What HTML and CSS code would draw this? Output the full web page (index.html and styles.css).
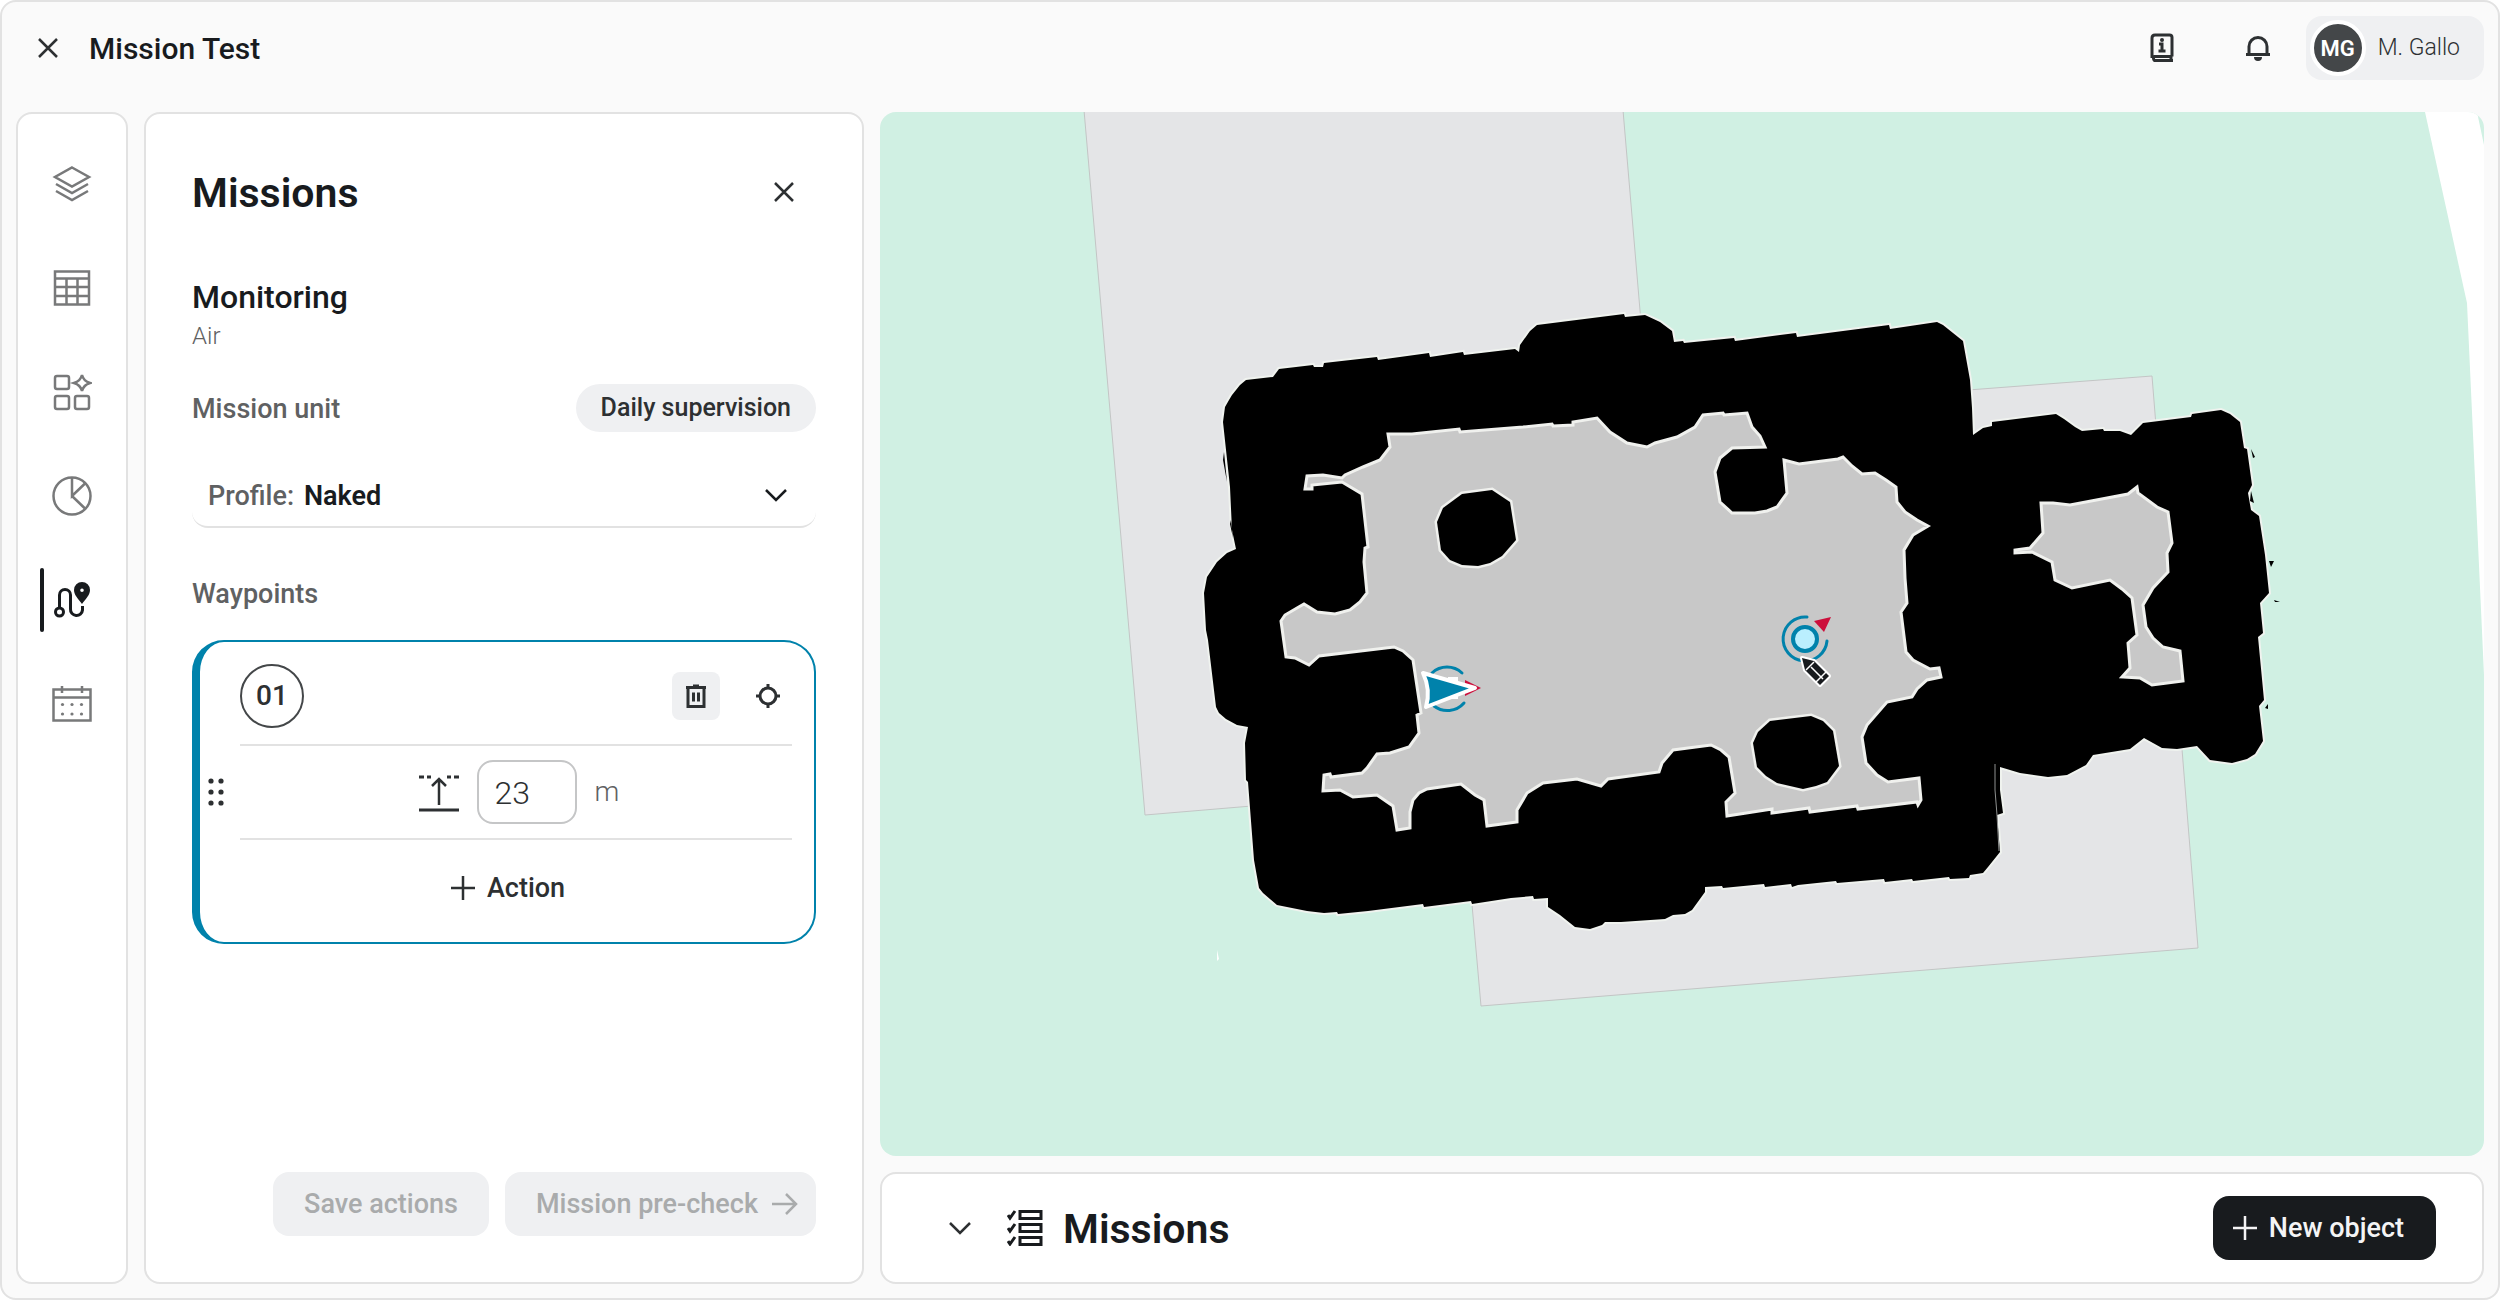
FILE: index.html
```html
<!DOCTYPE html>
<html lang="en">
<head>
<meta charset="utf-8">
<meta name="viewport" content="width=device-width, initial-scale=1">
<title>Mission Test</title>
<link rel="stylesheet" href="styles.css">
</head>
<body>
<div class="app">
  <header class="topbar">
    <button class="icon-btn" type="button" aria-label="Close mission">
      <svg class="icon" width="24" height="24" viewBox="0 0 24 24"><path d="M3 3 21 21M21 3 3 21"/></svg>
    </button>
    <h1 class="topbar-title">Mission Test</h1>
    <div class="topbar-tools">
      <button class="icon-btn" type="button" aria-label="Guide">
        <svg class="icon icon-thick" width="32" height="32" viewBox="0 0 32 32"><path d="M26 24.500H8.500a2.500 2.500 0 0 0 0 4H27M25 24.500v4M6 26V6q0-3 3-3h14.500q2.500 0 2.500 2.500v19M6 26q0-1.500 2.500-1.500"/><path d="M13 12h3v7M12.500 19h7"/><circle class="dot" cx="16" cy="8" r="2"/></svg>
      </button>
      <button class="icon-btn" type="button" aria-label="Notifications">
        <svg class="icon icon-thick" width="32" height="32" viewBox="0 0 32 32"><path d="M4 22.500h24M7 22V14.500a9 9 0 0 1 18 0V22"/><path class="dot" d="M12 25h8a4 4 0 0 1-8 0"/></svg>
      </button>
    </div>
    <button class="user" type="button"><span class="avatar">MG</span><span>M. Gallo</span></button>
  </header>

  <div class="workspace">
    <nav class="rail" aria-label="Sections">
      <a class="rail-link" href="#layers" aria-label="Layers"><svg class="icon" width="40" height="40" viewBox="0 0 40 40"><path d="M20 3.500 37 13 20 22.500 3 13ZM4 20l16 9 16-9M4 27l16 9 16-9"/></svg></a>
      <a class="rail-link" href="#table" aria-label="Table"><svg class="icon" width="40" height="40" viewBox="0 0 40 40"><path d="M3 3.500h34v33H3ZM3 10.500h34M3 19h34M3 28h34M14.500 11v25M25.500 11v25"/></svg></a>
      <a class="rail-link" href="#apps" aria-label="Apps"><svg class="icon" width="40" height="40" viewBox="0 0 40 40"><rect x="3" y="4" width="14" height="13" rx="2"/><rect x="3" y="24" width="14" height="13" rx="2"/><rect x="23" y="24" width="14" height="13" rx="2"/><path d="M30 3q1.500 6 8 8-6.500 2-8 8-1.500-6-8-8 6.500-2 8-8Z"/></svg></a>
      <a class="rail-link" href="#reports" aria-label="Reports"><svg class="icon" width="40" height="40" viewBox="0 0 40 40"><circle cx="20" cy="20" r="18.500"/><path d="M20 1.500V20L33 7.500M20 20 33 32.500"/></svg></a>
      <a class="rail-link rail-link-active" href="#missions" aria-label="Missions" aria-current="page"><svg class="icon icon-thick" width="40" height="40" viewBox="0 0 40 40"><circle cx="7.500" cy="32" r="4"/><path d="M7.500 27.500V15a5.500 5.500 0 0 1 11 0v14a6 6 0 0 0 12 1v-4"/><path class="dot" fill-rule="evenodd" d="M30 2a8 8 0 0 0-8 8c0 5 4 8.500 8 14 4-5.500 8-9 8-14a8 8 0 0 0-8-8Zm0 6.500a1.800 1.800 0 1 1 0 3.600 1.800 1.800 0 0 1 0-3.600Z"/></svg></a>
      <a class="rail-link" href="#calendar" aria-label="Calendar"><svg class="icon" width="40" height="40" viewBox="0 0 40 40"><path d="M1.500 5.500h37v31h-37ZM2 13.500h36M10 2v7M30 2v7"/><g class="dot"><circle cx="10.500" cy="20.500" r="1.600"/><circle cx="20" cy="20.500" r="1.600"/><circle cx="29.500" cy="20.500" r="1.600"/><circle cx="10.500" cy="30" r="1.600"/><circle cx="20" cy="30" r="1.600"/><circle cx="29.500" cy="30" r="1.600"/></g></svg></a>
    </nav>

    <aside class="panel">
      <div class="panel-head">
        <h2 class="heading">Missions</h2>
        <button class="icon-btn" type="button" aria-label="Close panel">
          <svg class="icon" width="24" height="24" viewBox="0 0 24 24"><path d="M3 3 21 21M21 3 3 21"/></svg>
        </button>
      </div>
      <h3 class="mission-name">Monitoring</h3>
      <p class="mission-kind">Air</p>
      <div class="unit-row"><span class="label">Mission unit</span><span class="tag">Daily supervision</span></div>
      <div class="profile">
        <label class="label" for="profile">Profile:</label>
        <select id="profile" class="profile-select"><option>Naked</option></select>
        <svg class="icon profile-arrow" width="24" height="24" viewBox="0 0 24 24"><path d="m2 7 10 10L22 7"/></svg>
      </div>
      <h3 class="label waypoints-title">Waypoints</h3>
      <section class="waypoint" aria-label="Waypoint 01">
        <svg class="grip" width="16" height="32" viewBox="0 0 16 32"><circle cx="3" cy="5" r="2.600"/><circle cx="13" cy="5" r="2.600"/><circle cx="3" cy="16" r="2.600"/><circle cx="13" cy="16" r="2.600"/><circle cx="3" cy="27" r="2.600"/><circle cx="13" cy="27" r="2.600"/></svg>
        <div class="waypoint-body">
          <div class="waypoint-head">
            <span class="number">01</span>
            <button class="square-btn square-btn-filled" type="button" aria-label="Delete waypoint">
              <svg class="icon icon-thick" width="28" height="28" viewBox="0 0 28 28"><path d="M4 5.500h20M11 4h6M6 6v18.500h16V6M11.500 10.500v9M16.500 10.500v9"/></svg>
            </button>
            <button class="square-btn" type="button" aria-label="Centre on waypoint">
              <svg class="icon icon-thick" width="28" height="28" viewBox="0 0 28 28"><circle cx="14" cy="14" r="8"/><path d="M14 2v5M14 21v5M2 14h5M21 14h5"/></svg>
            </button>
          </div>
          <div class="height-row">
            <svg class="icon" width="40" height="40" viewBox="0 0 40 40"><path d="M20 33V7M13 14l7-7 7 7"/><path class="bar" d="M0 38h40M0 5h5M8 5h4M28 5h4M35 5h5"/></svg>
            <input class="height-input" type="text" value="23" aria-label="Height in metres">
            <span class="unit">m</span>
          </div>
          <button class="add-action" type="button">
            <svg class="icon" width="24" height="24" viewBox="0 0 24 24"><path d="M12 0v24M0 12h24"/></svg>Action
          </button>
        </div>
      </section>
      <div class="panel-actions">
        <button class="btn" type="button" disabled>Save actions</button>
        <button class="btn btn-arrow" type="button" disabled>Mission pre-check
          <svg class="icon" width="26" height="24" viewBox="0 0 26 24"><path d="M0 12h24M14 2l10 10-10 10"/></svg>
        </button>
      </div>
    </aside>

    <main class="stage">
      <div class="map">
        <svg class="map-canvas" viewBox="880 112 1604 1044" preserveAspectRatio="xMidYMid slice" role="img" aria-label="Floor map">
          <path class="road" d="M2425 112 2467 303 2484 675V145L2477 112Z"/>
          <path class="zone" d="M1084 110H1623L1679 770 1145 815Z"/>
          <path class="zone" d="M1430 431 2152 376 2198 948 1481 1006Z"/>
          <path class="road" d="M1217 950l2 9-2 2Z"/>
          <path class="wall" d="M1225 407 1229 400 1232 395 1240 385 1246 380 1273 377 1279 369 1313 365 1314 367 1323 367 1324 363 1377 357 1378 360 1429 353 1430 357 1463 352 1464 355 1515 349 1519 352 1520 345 1530 331 1537 325 1624 314 1625 317 1645 315 1660 322 1672 331 1674 342 1683 341 1684 343 1734 338 1735 341 1796 333 1797 337 1889 325 1890 329 1937 322 1943 325 1963 341 1970 380 1972 408 1973 435 1983 428 1992 426 1992 422 2056 414 2064 419 2075 427 2082 431 2103 429 2104 431 2120 431 2131 435 2136 430 2143 423 2191 417 2192 414 2221 410 2230 414 2240 422 2244 448 2247 449 2252 485 2248 493 2251 510 2259 516 2265 555 2269 593 2260 603 2263 633 2258 637 2264 700 2259 706 2263 741 2255 754 2247 759 2232 763 2210 760 2197 746 2177 749 2162 748 2144 738 2130 749 2093 755 2086 765 2067 775 2048 777 2020 773 2000 767 2000 790 2003 813 1997 815 2000 852 1988 867 1983 873 1970 875 1969 878 1950 879 1949 877 1913 881 1912 879 1885 882 1884 879 1837 883 1836 881 1798 885 1792 887 1791 884 1765 887 1764 884 1723 888 1722 886 1705 887 1705 892 1692 910 1685 914 1673 915 1665 919 1621 922 1605 922 1602 925 1590 929 1575 927 1560 915 1548 907 1548 898 1534 899 1533 896 1511 898 1472 904 1471 901 1424 907 1423 904 1368 911 1338 914 1337 912 1324 913 1307 911 1277 905 1263 893 1259 888 1254 860 1248 782 1246 780 1245 743 1248 727 1237 725 1226 719 1219 713 1216 707 1208 640 1206 630 1204 593 1207 577 1217 562 1227 553 1236 549 1232 530 1230 487 1223 422Z"/>
          <path class="seam" d="M1995 764v26l2 25 2 36"/>
          <path class="room" d="M1323 475 1307 476 1305 489 1312 489 1312 485 1342 482 1362 494 1368 547 1365 548 1364 562 1367 593 1360 602 1350 610 1335 614 1317 612 1304 604 1297 608 1285 615 1281 621 1286 657 1295 658 1309 665 1319 656 1394 647 1403 651 1413 660 1421 713 1417 715 1419 733 1409 747 1390 753 1377 754 1367 768 1362 773 1331 777 1330 774 1324 775 1323 791 1340 790 1353 797 1377 795 1393 806 1397 830 1410 828 1410 812 1413 800 1419 793 1427 789 1461 784 1475 795 1484 800 1487 826 1517 822 1517 810 1527 793 1543 783 1577 779 1601 786 1608 779 1659 772 1662 763 1673 750 1711 745 1721 750 1729 757 1735 793 1726 802 1727 816 1772 809 1772 813 1809 808 1810 812 1857 806 1858 809 1917 802 1918 805 1921 800 1919 778 1888 782 1877 775 1866 763 1862 737 1867 725 1887 702 1912 697 1917 689 1927 680 1941 677 1939 668 1930 669 1913 660 1906 652 1901 612 1907 603 1905 578 1904 550 1913 535 1928 526 1917 520 1905 512 1897 502 1896 487 1886 480 1875 473 1862 474 1852 466 1843 457 1838 459 1799 464 1784 460 1787 493 1777 507 1767 511 1755 513 1732 513 1720 502 1715 472 1720 458 1732 448 1765 447 1760 436 1752 427 1747 413 1724 415 1723 413 1703 415 1695 427 1677 437 1655 443 1647 447 1627 443 1610 432 1597 418 1573 422 1573 425 1553 426 1552 424 1523 427 1460 432 1459 429 1412 434 1388 434 1390 447 1380 460 1363 467 1345 475 1342 478Z"/>
          <path class="room" d="M2041 503 2053 503 2070 505 2107 498 2128 494 2137 487 2138 493 2157 507 2168 512 2172 543 2167 553 2168 572 2153 588 2143 605 2146 627 2153 638 2163 647 2180 651 2183 681 2152 685 2140 678 2122 677 2130 668 2128 643 2137 635 2132 598 2122 589 2110 580 2072 588 2055 580 2052 562 2032 552 2015 553 2015 550 2030 548 2043 533Z"/>
          <path class="pillar" d="M1462 494 1492 490 1510 502 1516 540 1502 556 1490 563 1478 566 1462 565 1450 560 1441 550 1437 522 1443 508Z"/>
          <path class="pillar" d="M1770 721 1811 716 1823 721 1833 731 1839 766 1827 782 1816 786 1803 789 1777 783 1766 776 1757 767 1753 743 1758 732Z"/>
          <path class="debris" d="M2251 449l4 8-2 1ZM2269 561h5l-3 6ZM2274 600l6 2-5 0ZM2265 708l3-4v5ZM2251 491l3 12-4-2ZM1224 452l3 30-4-22ZM1231 520l2 18-3-14Z"/>

          <g class="robot">
            <path class="arc" d="M1432 673a22 22 0 0 1 30 0M1434 706a22 22 0 0 0 30-3"/>
            <path class="heading-mark" d="M1465 680 1481 688 1465 696Z"/>
            <path class="robot-body" d="M1448 677h10v22h-10Z"/>
            <path class="arrow" d="M1423 673 1475 688 1426 707Q1431 690 1423 673Z"/>
          </g>
          <g class="target">
            <path class="arc" d="M1807 617A22 22 0 1 0 1827 641"/>
            <circle class="core" cx="1805" cy="639" r="12"/>
            <path class="heading-mark" d="M1814 621 1831 617 1824 632Z"/>
          </g>
          <g class="pencil">
            <path class="pencil-edge" d="M1802 658 1814 661 1829 676 1820 685 1805 670Z"/>
            <path class="pencil-line" d="M1806 670 1814 662M1811 667 1823 679M1816 682 1826 672"/>
          </g>
        </svg>
      </div>

      <section class="drawer">
        <button class="icon-btn" type="button" aria-label="Expand missions">
          <svg class="icon" width="24" height="24" viewBox="0 0 24 24"><path d="m2 7 10 10L22 7"/></svg>
        </button>
        <svg class="icon icon-thick drawer-icon" width="36" height="36" viewBox="0 0 36 36"><path d="M13 1.500h21v7H13ZM13 14.500h21v7H13ZM13 27.500h21v7H13ZM1 5l2 3 5-7M1 18l2 3 5-7M1 31l2 3 5-7"/></svg>
        <h2 class="heading">Missions</h2>
        <button class="btn btn-dark" type="button">
          <svg class="icon" width="24" height="24" viewBox="0 0 24 24"><path d="M12 0v24M0 12h24"/></svg>New object
        </button>
      </section>
    </main>
  </div>
</div>
</body>
</html>
```
FILE: styles.css
```css
*,
*::before {
  box-sizing: border-box;
}

body {
  margin: 0;
  background: #fff;
  color: #181b1e;
  font: 400 28px/40px Roboto, "Liberation Sans", sans-serif;
}

h1, h2, h3, p {
  margin: 0;
}

button, input, select {
  margin: 0;
  padding: 0;
  border: 0;
  background: none;
  color: inherit;
  font: inherit;
}

.app {
  display: flex;
  flex-direction: column;
  min-height: 100vh;
  padding: 14px;
  border: 2px solid #e2e2e2;
  border-radius: 16px;
  background: #fafafa;
}

.icon {
  display: block;
  flex: none;
  fill: none;
  stroke: currentColor;
  stroke-width: 2.5;
}

.icon-thick {
  stroke-width: 3;
}

.icon .dot {
  fill: currentColor;
  stroke: none;
}

.icon .bar {
  stroke-width: 3;
}

.icon-btn {
  display: grid;
  place-items: center;
  width: 64px;
  height: 64px;
  color: #2d3032;
}

/* Top bar */
.topbar {
  display: flex;
  align-items: center;
  height: 64px;
  margin-bottom: 32px;
}

.topbar-title {
  margin-left: 9px;
  padding-top: 2px;
  font-size: 30px;
  font-weight: 500;
}

.topbar-tools {
  display: flex;
  gap: 32px;
  margin: 0 16px 0 auto;
}

.user {
  display: flex;
  align-items: center;
  gap: 12px;
  height: 64px;
  padding: 0 24px 0 4px;
  border-radius: 16px;
  background: #eff0f2;
  color: #2d3032;
  font-size: 23px;
  font-weight: 300;
}

.avatar {
  width: 56px;
  height: 56px;
  border: 4px solid #fff;
  border-radius: 50%;
  background: #444749;
  color: #fff;
  font-size: 22px;
  font-weight: 600;
  line-height: 50px;
  text-align: center;
}

/* Columns */
.workspace {
  display: flex;
  flex: 1;
  gap: 16px;
}

.rail,
.panel,
.drawer {
  border: 2px solid #e2e2e2;
  border-radius: 16px;
  background: #fff;
}

.rail {
  display: flex;
  flex: 0 0 112px;
  flex-direction: column;
  gap: 40px;
  padding-top: 38px;
}

.rail-link {
  position: relative;
  display: grid;
  place-items: center;
  height: 64px;
  color: #78797a;
}

.rail-link-active {
  color: #181b1e;
}

.rail-link-active::before {
  content: "";
  position: absolute;
  top: 0;
  left: 22px;
  width: 4px;
  height: 64px;
  border-radius: 2px;
  background: #181b1e;
}

/* Mission panel */
.panel {
  display: flex;
  flex: 0 0 720px;
  flex-direction: column;
  padding: 46px;
}

.panel-head {
  display: flex;
  align-items: center;
  justify-content: space-between;
  height: 64px;
}

.heading {
  padding-top: 2px;
  font-size: 41px;
  font-weight: 600;
  line-height: 64px;
}

.mission-name {
  margin-top: 53px;
  font-size: 32px;
  font-weight: 500;
}

.mission-kind {
  color: #5f6162;
  font-size: 24px;
  font-weight: 300;
  line-height: 38px;
}

.label {
  padding-top: 2px;
  color: #5f6162;
  font-size: 27px;
  font-weight: 500;
}

.unit-row {
  display: flex;
  align-items: center;
  justify-content: space-between;
  height: 48px;
  margin-top: 29px;
}

.tag {
  padding: 0 25px;
  border-radius: 24px;
  background: #eff0f2;
  color: #2d3032;
  font-size: 25px;
  font-weight: 500;
  line-height: 48px;
}

.profile {
  position: relative;
  display: flex;
  align-items: center;
  gap: 10px;
  height: 64px;
  margin-top: 32px;
  padding-left: 16px;
  border-bottom: 2px solid #e2e2e2;
  border-radius: 16px;
}

.profile-select {
  flex: 1;
  height: 62px;
  padding-top: 2px;
  appearance: none;
  font-size: 27px;
  font-weight: 600;
}

.profile-arrow {
  position: absolute;
  right: 28px;
  pointer-events: none;
}

.waypoints-title {
  margin-top: 44px;
}

.waypoint {
  display: flex;
  align-items: center;
  margin-top: 26px;
  padding: 22px 22px 22px 8px;
  border: 2px solid #0082ab;
  border-left-width: 8px;
  border-radius: 32px;
}

.grip {
  flex: none;
  margin-right: 16px;
  fill: #2d3032;
}

.waypoint-body {
  flex: 1;
}

.waypoint-head {
  display: flex;
  align-items: center;
  gap: 24px;
  padding-bottom: 16px;
}

.number {
  width: 64px;
  height: 64px;
  margin-right: auto;
  border: 2px solid #444749;
  border-radius: 50%;
  color: #2d3032;
  font-weight: 500;
  line-height: 60px;
  text-align: center;
}

.square-btn {
  display: grid;
  place-items: center;
  width: 48px;
  height: 48px;
  border-radius: 8px;
  color: #2d3032;
}

.square-btn-filled {
  background: #eff0f2;
}

.height-row {
  display: flex;
  align-items: center;
  justify-content: center;
  gap: 18px;
  padding: 14px 0 14px 6px;
  border: solid #e2e2e2;
  border-width: 2px 0;
  color: #2d3032;
}

.height-input {
  width: 100px;
  height: 64px;
  padding: 2px 0 0 16px;
  border: 2px solid #c5c6c7;
  border-radius: 16px;
  font-size: 32px;
  font-weight: 300;
}

.unit {
  color: #5f6162;
  font-weight: 300;
}

.add-action {
  display: flex;
  align-items: center;
  justify-content: center;
  gap: 12px;
  width: 100%;
  height: 64px;
  margin-top: 16px;
  padding-right: 16px;
  color: #2d3032;
  font-size: 27px;
  font-weight: 500;
}

.panel-actions {
  display: flex;
  justify-content: flex-end;
  gap: 16px;
  margin-top: auto;
}

.btn {
  display: flex;
  align-items: center;
  gap: 12px;
  height: 64px;
  padding: 0 31px;
  border-radius: 16px;
  background: #eff0f2;
  color: #a9abac;
  font-size: 27px;
  font-weight: 500;
}

.btn-arrow {
  gap: 14px;
  padding-right: 18px;
}

.btn-dark {
  margin-left: auto;
  padding: 0 32px 0 20px;
  background: #181b1e;
  color: #f4f4f5;
}

/* Map */
.stage {
  display: flex;
  flex: 1;
  flex-direction: column;
  gap: 16px;
  min-width: 0;
}

.map {
  position: relative;
  flex: 1;
  min-height: 400px;
  overflow: hidden;
  border-radius: 16px;
  background: #d0f0e3;
}

.map-canvas {
  position: absolute;
  width: 100%;
  height: 100%;
}

.road {
  fill: #fff;
}

.zone {
  fill: #e4e5e7;
  stroke: #c3c5c5;
}

.wall {
  fill: #000;
  stroke: #f0f3ef;
  stroke-width: 4;
  paint-order: stroke;
}

.seam {
  fill: none;
  stroke: #8f9190;
}

.room {
  fill: #c8c8c8;
  stroke: #f0f1ee;
  stroke-width: 3;
}

.pillar {
  fill: #000;
  stroke: #f0f1ee;
  stroke-width: 5;
  paint-order: stroke;
}

.arc {
  fill: none;
  stroke: #0082ab;
  stroke-width: 3;
  stroke-linecap: round;
}

.core {
  fill: #baeffe;
  stroke: #0082ab;
  stroke-width: 4;
}

.heading-mark {
  fill: #cc0f3b;
}

.robot-body {
  fill: #fff;
}

.arrow {
  fill: #0082ab;
  stroke: #fff;
  stroke-width: 4;
  stroke-linejoin: round;
}

.pencil-edge {
  fill: #181b1e;
  stroke: #fff;
  stroke-width: 4;
  stroke-linejoin: round;
  paint-order: stroke;
}

.pencil-line {
  fill: none;
  stroke: #fff;
  stroke-width: 1.5;
}

/* Drawer */
.drawer {
  display: flex;
  align-items: center;
  height: 112px;
  padding: 0 46px;
}

.drawer-icon {
  margin: 0 20px 0 15px;
}
```
